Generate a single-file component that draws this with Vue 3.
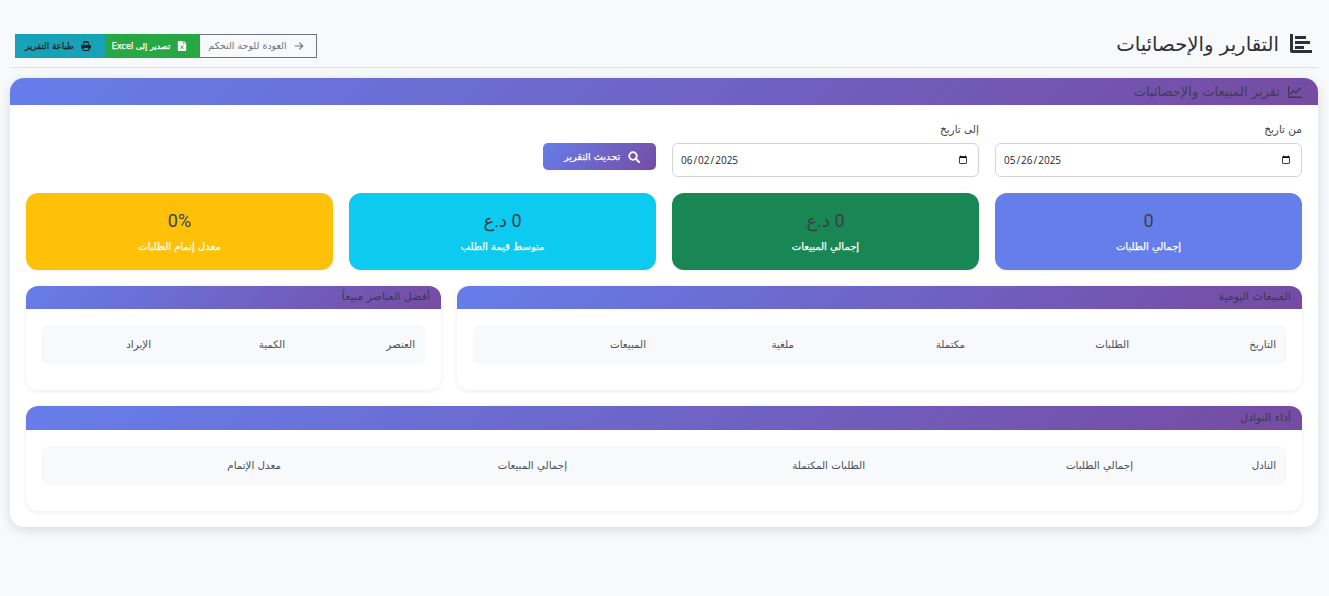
<script setup>
const stats = [
  { value: '0', label: 'إجمالي الطلبات', tone: 'blue' },
  { value: '0 د.ع', label: 'إجمالي المبيعات', tone: 'green' },
  { value: '0 د.ع', label: 'متوسط قيمة الطلب', tone: 'cyan' },
  { value: '0%', label: 'معدل إتمام الطلبات', tone: 'yellow' },
]
const daily = [['التاريخ', 147], ['الطلبات', 164], ['مكتملة', 171], ['ملغية', 148], ['المبيعات', 183]]
const top = [['العنصر', 130], ['الكمية', 134], ['الإيراد', 119]]
const staff = [['النادل', 143], ['إجمالي الطلبات', 268], ['الطلبات المكتملة', 298], ['إجمالي المبيعات', 286], ['معدل الإتمام', 249]]
</script>

<template>
  <div class="page" dir="rtl">
    <header class="top">
      <h1 class="title">
        <svg class="title-icon" viewBox="0 0 22 19" aria-hidden="true">
          <path d="M0 0h3v16h19v3H2a2 2 0 0 1-2-2z" />
          <path d="M5 2h11v3H5zM5 7h15v3H5zM5 12h9v3H5z" />
        </svg>
        <span class="title-text">التقارير والإحصائيات</span>
      </h1>
      <div class="actions">
        <a class="btn back">
          <svg class="ic" viewBox="0 0 12 12" aria-hidden="true"><path d="M1 6h9.500M6.500 2l4 4-4 4" fill="none" stroke="currentColor" stroke-width="1.300" /></svg>
          العودة للوحة التحكم
        </a>
        <a class="btn excel">
          <svg class="ic" viewBox="0 0 10 12" aria-hidden="true"><path fill="currentColor" d="M0 1a1 1 0 0 1 1-1h5v3h4v8a1 1 0 0 1-1 1H1a1 1 0 0 1-1-1zM7 0l3 2.400H7z" /><path d="M3.300 5.500l3.400 4M6.700 5.500l-3.400 4" stroke="#28a745" stroke-width="1.100" /></svg>
          تصدير إلى Excel
        </a>
        <a class="btn print">
          <svg class="ic" viewBox="0 0 12 12" aria-hidden="true"><path fill="currentColor" d="M3 0h5l1.500 1.500V4h-1V2H3.500v2H2.500V.5zM1.500 4.500h9A1.500 1.500 0 0 1 12 6v3h-2v3H2V9H0V6a1.500 1.500 0 0 1 1.500-1.500zM3.300 8.500v2.200h5.400V8.500z" /></svg>
          طباعة التقرير
        </a>
      </div>
    </header>

    <section class="card">
      <div class="card-head">
        <svg class="head-icon" viewBox="0 0 14 12" aria-hidden="true"><path d="M.7 0v11.300H14" fill="none" stroke="currentColor" stroke-width="1.400" /><path d="M2.500 8.200l3-3.500 2.300 2L12.800 1.500" fill="none" stroke="currentColor" stroke-width="1.400" /></svg>
        تقرير المبيعات والإحصائيات
      </div>
      <div class="card-body">
        <div class="filters">
          <label class="field">
            <span>من تاريخ</span>
            <input type="date" dir="ltr" value="2025-05-26" />
          </label>
          <label class="field">
            <span>إلى تاريخ</span>
            <input type="date" dir="ltr" value="2025-06-02" />
          </label>
          <div class="submit">
            <button class="refresh" type="button">
              <svg class="ic-search" viewBox="0 0 12 12" aria-hidden="true"><circle cx="5" cy="5" r="3.800" fill="none" stroke="currentColor" stroke-width="1.800" /><path d="M7.800 7.800L11 11" stroke="currentColor" stroke-width="2" stroke-linecap="round" /></svg>
              تحديث التقرير
            </button>
          </div>
        </div>

        <div class="stats">
          <div v-for="s in stats" :key="s.label" class="stat" :class="s.tone">
            <div class="stat-value">{{ s.value }}</div>
            <div class="stat-label">{{ s.label }}</div>
          </div>
        </div>

        <div class="split">
          <div class="panel">
            <div class="panel-head">المبيعات اليومية</div>
            <div class="panel-body">
              <table>
                <thead><tr><th v-for="c in daily" :key="c[0]" :style="{ width: c[1] + 'px' }">{{ c[0] }}</th></tr></thead>
              </table>
            </div>
          </div>
          <div class="panel">
            <div class="panel-head">أفضل العناصر مبيعاً</div>
            <div class="panel-body">
              <table>
                <thead><tr><th v-for="c in top" :key="c[0]" :style="{ width: c[1] + 'px' }">{{ c[0] }}</th></tr></thead>
              </table>
            </div>
          </div>
        </div>

        <div class="panel">
          <div class="panel-head tall">أداء النوادل</div>
          <div class="panel-body">
            <table>
              <thead><tr><th v-for="c in staff" :key="c[0]" :style="{ width: c[1] + 'px' }">{{ c[0] }}</th></tr></thead>
            </table>
          </div>
        </div>
      </div>
    </section>
  </div>
</template>

<style>
html, body { margin: 0; background: #f8f9fa; }
</style>

<style scoped>
.page {
  box-sizing: border-box;
  min-height: 596px;
  padding: 0 11px 0 10px;
  font-family: "DejaVu Sans", "Noto Sans", sans-serif;
  color: #343a40;
  background: #f8f9fa;
}
.top {
  display: flex;
  justify-content: space-between;
  align-items: flex-start;
  height: 67px;
  padding: 0 6px 0 5px;
  border-bottom: 1px solid #dee2e6;
}
.title {
  display: flex;
  align-items: center;
  gap: 11px;
  margin: 34px 0 0;
  height: 19px;
  font-size: 19.700px;
  font-weight: 400;
  color: #2d3238;
}
.title-text { position: relative; top: 1px; }
.title-icon { width: 22px; height: 19px; fill: #2d3238; }
.actions { display: flex; margin-top: 34px; }
.btn {
  display: flex;
  align-items: center;
  justify-content: center;
  gap: 7px;
  box-sizing: border-box;
  height: 24px;
  padding-bottom: 1px;
  font-size: 8.700px;
  white-space: nowrap;
}
.ic { width: 10px; height: 10px; flex: none; }
.back { width: 118px; padding-right: 4px; border: 1px solid #6c757d; color: #6c757d; font-size: 9.500px; }
.excel { width: 94px; padding-right: 5px; background: #28a745; color: #fff; font-size: 8.100px; -webkit-text-stroke: .25px currentColor; }
.print { width: 90px; padding-right: 4px; background: #17a2b8; color: #212529; -webkit-text-stroke: .25px currentColor; }

.card {
  margin-top: 10px;
  background: #fff;
  border-radius: 14px;
  box-shadow: 0 3px 12px rgba(0, 0, 0, .12);
  overflow: hidden;
}
.card-head {
  display: flex;
  align-items: center;
  gap: 8px;
  height: 27px;
  padding: 0 16px;
  background: linear-gradient(135deg, #667eea 0%, #764ba2 100%);
  font-size: 13px;
  color: #40404f;
}
.head-icon { width: 14px; height: 12px; color: #3d3d55; }
.card-body { display: flex; flex-direction: column; gap: 16px; padding: 16px; }

.filters { display: grid; grid-template-columns: repeat(4, 1fr); column-gap: 16px; }
.field { display: flex; flex-direction: column; gap: 6px; font-size: 10.500px; color: #444; }
.field span { height: 15px; line-height: 15px; padding-top: 1px; }
.field input {
  box-sizing: border-box;
  width: 100%;
  height: 34px;
  padding: 0 8px 0 7px;
  border: 1px solid #ced4da;
  border-radius: 6px;
  background: #fff;
  font-family: "Open Sans", sans-serif;
  font-size: 10px;
  color: #212529;
}
.submit { padding-top: 22px; }
.refresh {
  display: flex;
  align-items: center;
  justify-content: center;
  gap: 8px;
  width: 113px;
  height: 27px;
  border: 0;
  border-radius: 5px;
  background: linear-gradient(135deg, #667eea, #764ba2);
  color: #fff;
  font-family: inherit;
  font-size: 9.700px;
  -webkit-text-stroke: .25px currentColor;
  padding: 0 0 0 5px;
}
.ic-search { width: 12px; height: 12px; }

.stats { display: grid; grid-template-columns: repeat(4, 1fr); gap: 16px; }
.stat {
  display: flex;
  flex-direction: column;
  align-items: center;
  justify-content: center;
  gap: 8px;
  height: 77px;
  border-radius: 12px;
  box-shadow: 0 1px 3px rgba(0, 0, 0, .06);
}
.stat-value { font-family: Roboto, "DejaVu Sans", sans-serif; font-size: 18px; line-height: 22px; color: #3a4048; }
.stat-label { font-size: 10px; line-height: 14px; color: #fff; -webkit-text-stroke: .25px currentColor; }
.blue { background: #667eea; }
.green { background: #198754; }
.cyan { background: #0dcaf0; }
.yellow { background: #ffc107; }

.split { display: grid; grid-template-columns: 845fr 415fr; gap: 16px; }
.panel {
  background: #fff;
  border-radius: 12px;
  box-shadow: 0 1px 5px rgba(0, 0, 0, .08);
  overflow: hidden;
}
.panel-head {
  display: flex;
  align-items: center;
  box-sizing: border-box;
  height: 23px;
  padding: 0 11px 2px;
  background: linear-gradient(135deg, #667eea, #764ba2);
  font-size: 11px;
  color: #3b3b4c;
}
.panel-head.tall { height: 24px; }
.panel-body { padding: 16px 16px 26px; }
table {
  width: 100%;
  table-layout: fixed;
  border-collapse: separate;
  border-spacing: 0;
  background: #f8f9fa;
  border-radius: 6px;
}
th {
  height: 39px;
  padding: 0 10px 2px;
  box-sizing: border-box;
  text-align: right;
  font-size: 10.300px;
  font-weight: 400;
  color: #495057;
}
</style>
